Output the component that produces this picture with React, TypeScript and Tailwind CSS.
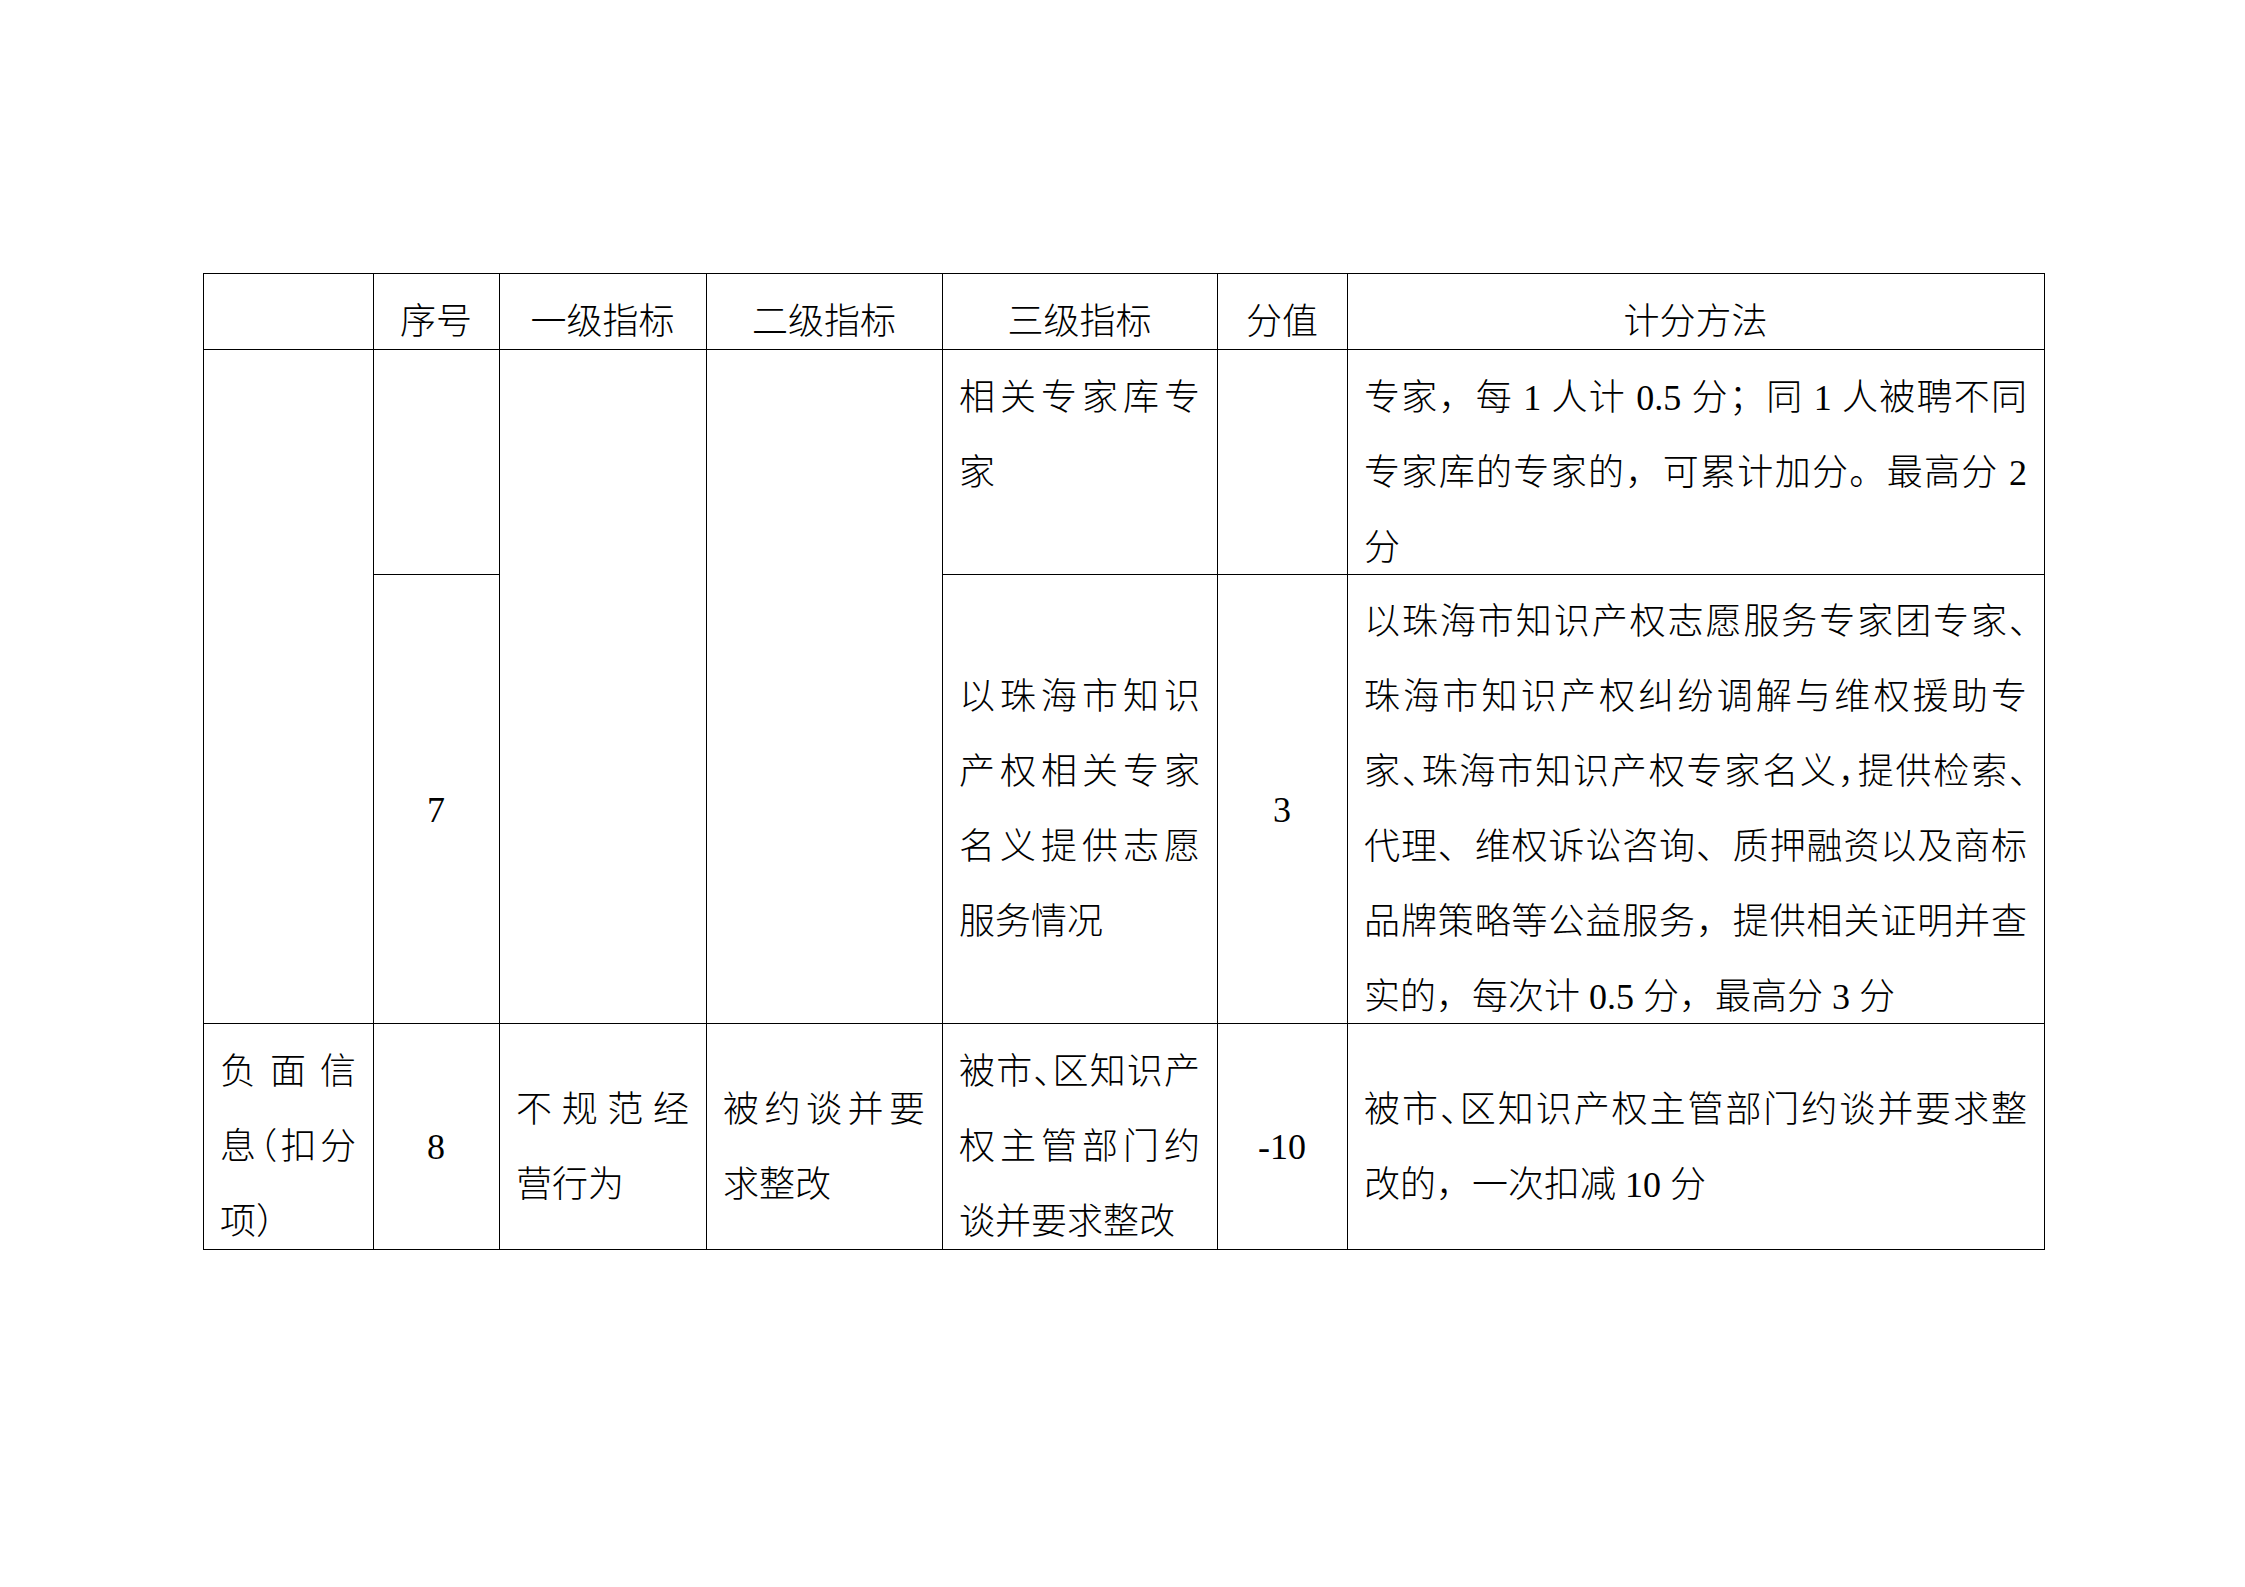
import type { ReactNode } from "react";
import clsx from "clsx";

const H = ({ children }: { children: ReactNode }) => (
  <span className="[font-feature-settings:'halt']">{children}</span>
);

type CellProps = {
  lines?: ReactNode[];
  mode?: "justify" | "center";
  top?: boolean;
  className?: string;
};

const Cell = ({ lines = [], mode = "justify", top = false, className }: CellProps) => {
  return (
    <div
      className={clsx(
        "flex flex-col border-r border-b border-black pl-[16px] pr-[17px]",
        top ? "justify-start pt-[11px]" : "justify-center pt-[22px]",
        className
      )}
    >
      {lines.map((line, i) => (
        <div
          key={i}
          className={clsx(
            "h-[75px] shrink-0 leading-[75px] whitespace-nowrap",
            mode === "center"
              ? "text-center"
              : i < lines.length - 1
                ? "text-justify [text-align-last:justify]"
                : "text-left"
          )}
        >
          {line}
        </div>
      ))}
    </div>
  );
};

const App = () => {
  return (
    <div className="min-h-screen w-full bg-white pl-[203px] pt-[273px] text-black">
      <div className="grid w-[1842px] grid-cols-[170px_126px_207px_236px_275px_130px_697px] grid-rows-[76px_225px_449px_226px] border-t border-l border-black font-['Liberation_Serif','Noto_Sans_CJK_SC',serif] text-[36px] font-light">
        {/* header */}
        <Cell />
        <Cell mode="center" lines={["序号"]} />
        <Cell mode="center" lines={["一级指标"]} />
        <Cell mode="center" lines={["二级指标"]} />
        <Cell mode="center" lines={["三级指标"]} />
        <Cell mode="center" lines={["分值"]} />
        <Cell mode="center" lines={["计分方法"]} />

        {/* continued row */}
        <Cell className="row-span-2" />
        <Cell />
        <Cell className="row-span-2" />
        <Cell className="row-span-2" />
        <Cell top lines={["相关专家库专", "家"]} />
        <Cell />
        <Cell
          top
          lines={[
            "专家，每 1 人计 0.5 分；同 1 人被聘不同",
            "专家库的专家的，可累计加分。最高分 2",
            "分",
          ]}
        />

        {/* 7 */}
        <Cell mode="center" lines={["7"]} />
        <Cell lines={["以珠海市知识", "产权相关专家", "名义提供志愿", "服务情况"]} />
        <Cell mode="center" lines={["3"]} />
        <Cell
          lines={[
            <>
              以珠海市知识产权志愿服务专家团专家<H>、</H>
            </>,
            "珠海市知识产权纠纷调解与维权援助专",
            <>
              家<H>、</H>珠海市知识产权专家名义<H>，</H>提供检索<H>、</H>
            </>,
            "代理、维权诉讼咨询、质押融资以及商标",
            "品牌策略等公益服务，提供相关证明并查",
            "实的，每次计 0.5 分，最高分 3 分",
          ]}
        />

        {/* 8 */}
        <Cell lines={["负面信", <>息<H>（</H>扣分</>, "项）"]} />
        <Cell mode="center" lines={["8"]} />
        <Cell lines={["不规范经", "营行为"]} />
        <Cell lines={["被约谈并要", "求整改"]} />
        <Cell lines={[<>被市<H>、</H>区知识产</>, "权主管部门约", "谈并要求整改"]} />
        <Cell mode="center" lines={["-10"]} />
        <Cell
          lines={[
            <>
              被市<H>、</H>区知识产权主管部门约谈并要求整
            </>,
            "改的，一次扣减 10 分",
          ]}
        />
      </div>
    </div>
  );
};

export default App;
